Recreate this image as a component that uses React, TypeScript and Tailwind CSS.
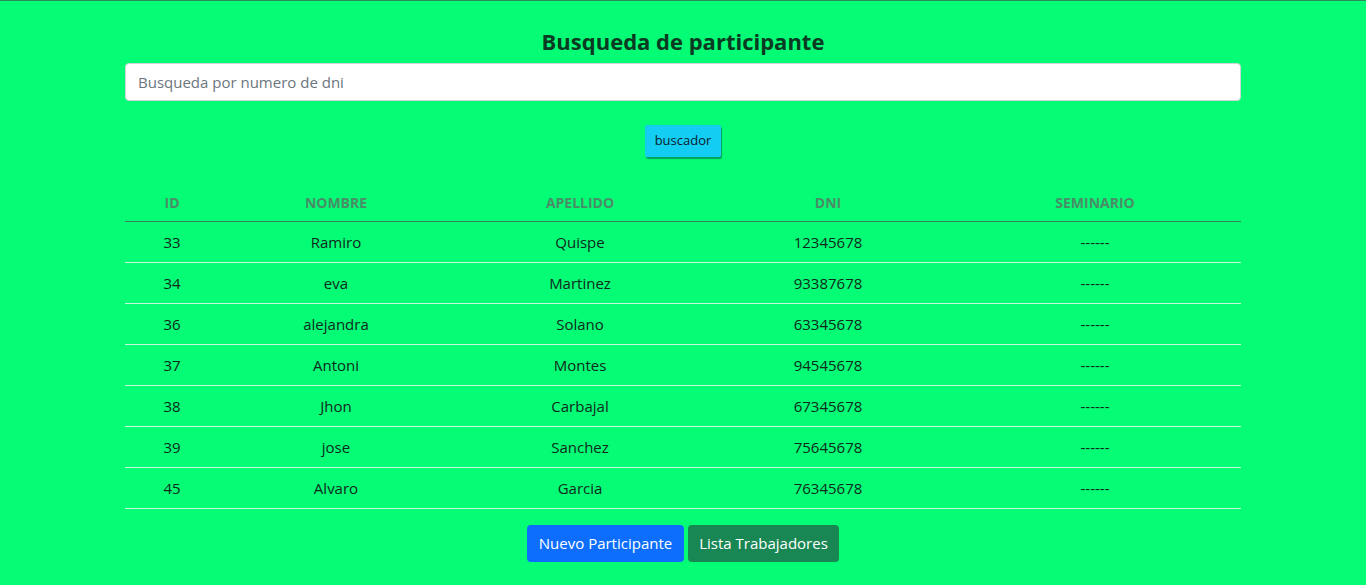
const participantes = [
  { id: 33, nombre: "Ramiro", apellido: "Quispe", dni: "12345678" },
  { id: 34, nombre: "eva", apellido: "Martinez", dni: "93387678" },
  { id: 36, nombre: "alejandra", apellido: "Solano", dni: "63345678" },
  { id: 37, nombre: "Antoni", apellido: "Montes", dni: "94545678" },
  { id: 38, nombre: "Jhon", apellido: "Carbajal", dni: "67345678" },
  { id: 39, nombre: "jose", apellido: "Sanchez", dni: "75645678" },
  { id: 45, nombre: "Alvaro", apellido: "Garcia", dni: "76345678" },
];

export default function App() {
  return (
    <div
      className="min-h-[585px] bg-[#05fc75] border-t border-[#2f8a5a] text-[#0f2a1c]"
      style={{ fontFamily: '"Open Sans", "Noto Sans", sans-serif' }}
    >
      <div className="mx-auto w-[1116px] pt-[25px]">
        <h1 className="text-center text-[22px] font-bold text-[#0b3a22] leading-[30px]">
          Busqueda de participante
        </h1>
        <input
          className="mt-[7px] block h-[38px] w-full rounded-[4px] border border-[#ced4da] bg-white px-3 text-[15px] text-[#212529] placeholder:text-[#6c757d] outline-none"
          placeholder="Busqueda por numero de dni"
        />
        <div className="mt-[24px] flex justify-center">
          <button className="h-[32px] w-[76px] rounded-[2px] bg-[#13cdf2] text-[13px] text-[#0d2030] shadow-[1px_2px_1px_rgba(0,90,70,0.55)]">
            buscador
          </button>
        </div>

        <table className="mt-[28px] w-full table-fixed border-separate border-spacing-0 text-[15px]">
          <colgroup>
            <col className="w-[94px]" />
            <col className="w-[234px]" />
            <col className="w-[254px]" />
            <col className="w-[242px]" />
            <col className="w-[292px]" />
          </colgroup>
          <thead>
            <tr>
              {["ID", "NOMBRE", "APELLIDO", "DNI", "SEMINARIO"].map((h) => (
                <th
                  key={h}
                  className="h-[37px] pb-[2px] border-b border-[#3f8060] text-center text-[14px] font-bold text-[#4a8c68]"
                >
                  {h}
                </th>
              ))}
            </tr>
          </thead>
          <tbody>
            {participantes.map((p) => (
              <tr key={p.id}>
                {[p.id, p.nombre, p.apellido, p.dni, "------"].map((v, i) => (
                  <td
                    key={i}
                    className="h-[41px] border-b border-[#c9f7de] text-center"
                  >
                    {v}
                  </td>
                ))}
              </tr>
            ))}
          </tbody>
        </table>

        <div className="mt-[16px] flex justify-center gap-[4px]">
          <button className="h-[37px] w-[157px] rounded-[4px] bg-[#0d6efd] text-[15px] text-white">
            Nuevo Participante
          </button>
          <button className="h-[37px] w-[151px] rounded-[4px] bg-[#198754] text-[15px] text-white">
            Lista Trabajadores
          </button>
        </div>
      </div>
    </div>
  );
}
